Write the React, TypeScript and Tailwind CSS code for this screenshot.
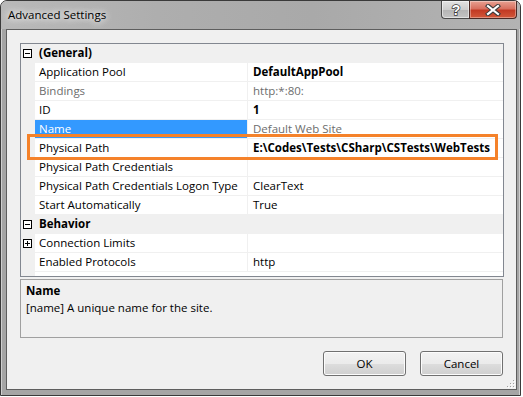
import React from "react";

type Row =
  | { type: "cat"; label: string }
  | {
      type: "prop";
      name: string;
      value: string;
      bold?: boolean;
      gray?: boolean;
      selected?: boolean;
      expandable?: boolean;
    };

const rows: Row[] = [
  { type: "cat", label: "(General)" },
  { type: "prop", name: "Application Pool", value: "DefaultAppPool", bold: true },
  { type: "prop", name: "Bindings", value: "http:*:80:", gray: true },
  { type: "prop", name: "ID", value: "1", bold: true },
  { type: "prop", name: "Name", value: "Default Web Site", selected: true },
  {
    type: "prop",
    name: "Physical Path",
    value: "E:\\Codes\\Tests\\CSharp\\CSTests\\WebTests",
    bold: true,
  },
  { type: "prop", name: "Physical Path Credentials", value: "" },
  { type: "prop", name: "Physical Path Credentials Logon Type", value: "ClearText" },
  { type: "prop", name: "Start Automatically", value: "True" },
  { type: "cat", label: "Behavior" },
  { type: "prop", name: "Connection Limits", value: "", expandable: true },
  { type: "prop", name: "Enabled Protocols", value: "http" },
];

function Box({ plus }: { plus?: boolean }) {
  return (
    <svg width="9" height="9" viewBox="0 0 9 9" className="block">
      <rect x="0.5" y="0.5" width="8" height="8" fill="#fff" stroke="#000" />
      <line x1="2" y1="4.5" x2="7" y2="4.5" stroke="#000" />
      {plus && <line x1="4.5" y1="2" x2="4.5" y2="7" stroke="#000" />}
    </svg>
  );
}

function GridRow({ row }: { row: Row }) {
  if (row.type === "cat") {
    return (
      <div className="flex h-[19px] bg-[#f0f0f0] border-b border-[#f0f0f0]">
        <div className="w-[14px] flex items-center pl-[2px]">
          <Box />
        </div>
        <div className="pl-[4px] flex items-center font-bold text-black">{row.label}</div>
      </div>
    );
  }
  return (
    <div className="flex h-[19px] border-b border-[#f0f0f0]">
      <div className="w-[14px] bg-[#f0f0f0] flex items-center pl-[2px]">
        {row.expandable && <Box plus />}
      </div>
      <div
        className={
          "w-[212px] pl-[4px] flex items-center whitespace-nowrap overflow-hidden " +
          (row.selected
            ? "bg-[#3399ff] text-white"
            : row.gray
            ? "text-[#6d6d6d]"
            : "text-black")
        }
      >
        {row.name}
      </div>
      <div className="w-px bg-[#f0f0f0]" />
      <div
        className={
          "flex-1 pl-[5px] flex items-center whitespace-nowrap " +
          (row.bold ? "font-bold text-black " : "") +
          (row.gray || row.selected ? "text-[#6d6d6d]" : "text-black")
        }
      >
        {row.value}
      </div>
    </div>
  );
}

export default function App() {
  return (
    <div
      className="w-[523px] h-[397px] bg-white"
      style={{ fontFamily: '"Open Sans", "Noto Sans", sans-serif' }}
    >
      <div className="relative w-[521px] h-[396px] flex flex-col rounded-t-[7px] border border-[#3a3a3a] bg-[#a5a5a5] shadow-[inset_1px_1px_0_#cfcfcf,inset_-1px_0_0_#cfcfcf] text-[11.5px] leading-none">
        {/* Title bar */}
        <div className="h-[28px] flex items-start justify-between rounded-t-[6px] bg-[linear-gradient(to_right,#b9b9b9_0%,#aeaeae_30%,#a9a9a9_60%,#b3b3b3_100%)]">
          <div className="self-center pl-[7px] text-black text-[11.5px] [text-shadow:0_0_6px_#ffffff,0_0_10px_#ffffff]">
            Advanced Settings
          </div>
          <div className="flex mr-[3px]">
            <div className="w-[28px] h-[18px] flex items-center justify-center border border-t-0 border-r-0 border-[#4a4a4a] rounded-bl-[4px] bg-[linear-gradient(to_bottom,#e2e2e2_0%,#cdcdcd_50%,#b4b4b4_51%,#c4c4c4_100%)] shadow-[inset_0_0_0_1px_rgba(255,255,255,0.5)]">
              <svg width="12" height="14" viewBox="0 0 12 14">
                <text
                  x="6"
                  y="12"
                  textAnchor="middle"
                  fontSize="14"
                  fontWeight="bold"
                  fontFamily="Liberation Sans, sans-serif"
                  fill="#ffffff"
                  stroke="#3a3a3a"
                  strokeWidth="1.5"
                  paintOrder="stroke"
                >
                  ?
                </text>
              </svg>
            </div>
            <div className="w-[48px] h-[18px] flex items-center justify-center border border-t-0 border-[#4a2a26] rounded-br-[4px] bg-[linear-gradient(to_bottom,#e8a192_0%,#d8705f_45%,#c23a24_55%,#d2583a_100%)] shadow-[inset_0_0_0_1px_rgba(255,255,255,0.35)]">
              <svg width="16" height="12" viewBox="0 0 16 12">
                <path d="M3 2 L13 10 M13 2 L3 10" stroke="#3b3b3b" strokeWidth="4.2" strokeLinecap="square" />
                <path d="M3 2 L13 10 M13 2 L3 10" stroke="#ffffff" strokeWidth="2.2" strokeLinecap="square" />
              </svg>
            </div>
          </div>
        </div>

        {/* Client area */}
        <div className="relative ml-[5px] mr-[3px] mb-[5px] h-[361px] border border-[#5e5e5e] bg-[#f0f0f0] pl-[13px] pr-[12px] pt-[13px] pb-[13px] flex flex-col">
          {/* Property grid */}
          <div className="relative w-[484px] h-[234px] border border-[#828790] bg-white flex flex-col">
            {rows.map((r, i) => (
              <GridRow key={i} row={r} />
            ))}
            <div className="flex-1 flex">
              <div className="w-[14px] bg-[#f0f0f0]" />
            </div>
            {/* Orange highlight */}
            <div className="absolute left-[6px] top-[90px] w-[471px] h-[26px] border-[3px] border-[#f5822a]" />
          </div>

          {/* Description panel */}
          <div className="mt-[2px] w-[483px] h-[59px] border border-[#a0a0a0] pl-[5px] pt-[2px] leading-[17px] text-black">
            <div className="font-bold">Name</div>
            <div>[name] A unique name for the site.</div>
          </div>

          {/* Buttons */}
          <div className="mt-[13px] flex justify-end gap-[14px] pr-[1px]">
            <button className="w-[83px] h-[25px] rounded-[3px] border border-[#707070] bg-[linear-gradient(to_bottom,#f2f2f2_0%,#ebebeb_50%,#dddddd_51%,#cfcfcf_100%)] shadow-[inset_0_0_0_1px_#fcfcfc] text-black text-[11.5px]">
              OK
            </button>
            <button className="w-[83px] h-[25px] rounded-[3px] border border-[#707070] bg-[linear-gradient(to_bottom,#f2f2f2_0%,#ebebeb_50%,#dddddd_51%,#cfcfcf_100%)] shadow-[inset_0_0_0_1px_#fcfcfc] text-black text-[11.5px]">
              Cancel
            </button>
          </div>

          {/* Resize grip */}
          <svg className="absolute right-[1px] bottom-[1px]" width="8" height="8" viewBox="0 0 8 8">
            {[
              [6, 0],
              [6, 3],
              [3, 3],
              [6, 6],
              [3, 6],
              [0, 6],
            ].map(([x, y], i) => (
              <g key={i}>
                <rect x={x + 1} y={y + 1} width="1" height="1" fill="#ffffff" />
                <rect x={x} y={y} width="1" height="1" fill="#a0a0a0" />
              </g>
            ))}
          </svg>
        </div>
      </div>
    </div>
  );
}
